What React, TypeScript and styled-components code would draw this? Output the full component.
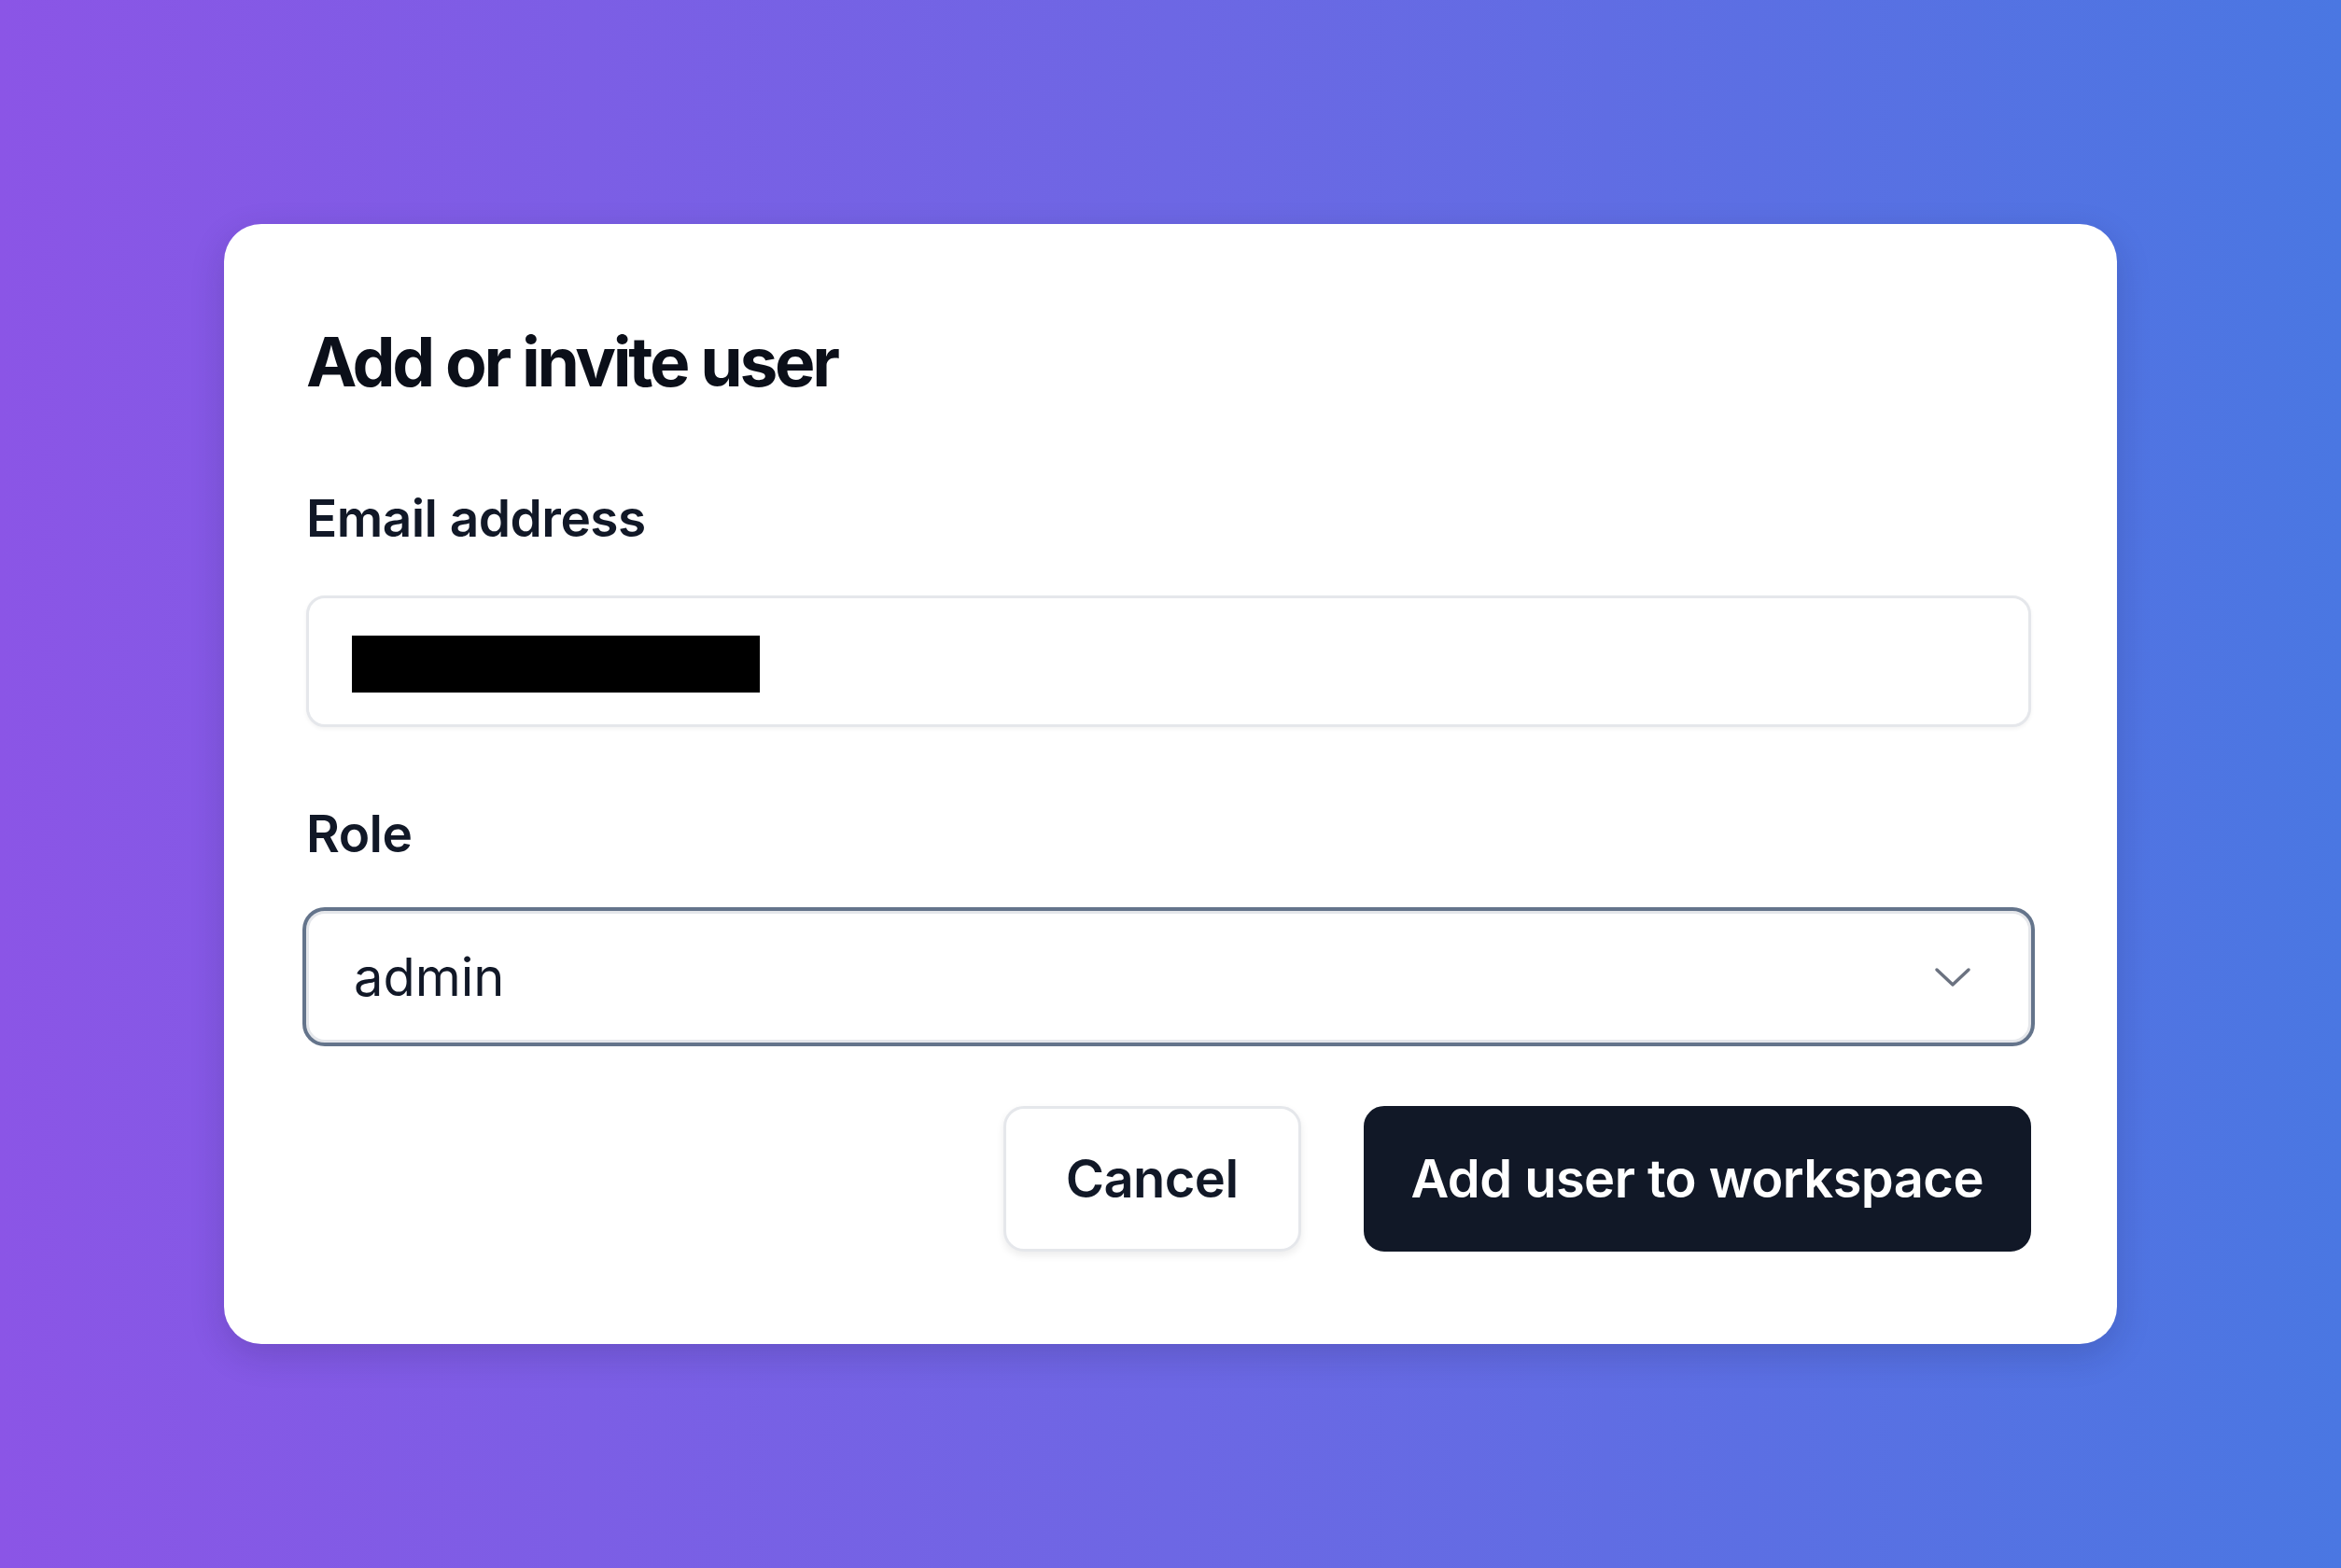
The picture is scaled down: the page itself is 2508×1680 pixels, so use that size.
import styled, { createGlobalStyle } from 'styled-components';

const GlobalStyle = createGlobalStyle`
  html, body {
    margin: 0;
    padding: 0;
  }
  body {
    font-family: Inter, "Noto Sans", sans-serif;
    -webkit-font-smoothing: antialiased;
  }
`;

const Page = styled.div`
  width: 2508px;
  height: 1680px;
  display: flex;
  align-items: center;
  justify-content: center;
  background: linear-gradient(90deg, #8b55e6 0%, #6d67e4 50%, #4a77e2 100%);
`;

const Card = styled.div`
  width: 2028px;
  height: 1200px;
  box-sizing: border-box;
  padding: 102px 92px 100px 88px;
  background: #ffffff;
  border-radius: 40px;
  box-shadow: 0 12px 36px rgba(20, 20, 60, 0.18);
  display: flex;
  flex-direction: column;
`;

const Title = styled.h1`
  margin: 0 0 81px;
  font-size: 73px;
  line-height: 92px;
  font-weight: 700;
  letter-spacing: -0.045em;
  color: #0b0f19;
`;

const Label = styled.label`
  display: block;
  margin-bottom: 42px;
  font-size: 55px;
  line-height: 81px;
  font-weight: 600;
  letter-spacing: -0.01em;
  color: #111827;
`;

const Field = styled.div`
  margin-bottom: 74px;
`;

const TextBox = styled.div`
  height: 141px;
  box-sizing: border-box;
  padding: 0 46px;
  display: flex;
  align-items: center;
  border: 3px solid #e5e7eb;
  border-radius: 20px;
  box-shadow: 0 2px 4px rgba(0, 0, 0, 0.05);
  background: #fff;
`;

const Redacted = styled.span`
  display: block;
  width: 437px;
  height: 61px;
  margin-top: 6px;
  background: #000;
`;

const SelectBox = styled.div`
  height: 141px;
  box-sizing: border-box;
  padding: 0 61px 0 48px;
  display: flex;
  align-items: center;
  justify-content: space-between;
  border: 3px solid #e5e7eb;
  border-radius: 20px;
  box-shadow: 0 0 0 4px #64748b;
  background: #fff;
  font-size: 56px;
  font-weight: 400;
  color: #111827;
`;

const Actions = styled.div`
  margin-top: 68px;
  display: flex;
  justify-content: flex-end;
  gap: 67px;
`;

const Button = styled.button<{ $primary?: boolean }>`
  height: 156px;
  box-sizing: border-box;
  padding: ${({ $primary }) => ($primary ? '0 48px' : '0 64px')};
  border-radius: 22px;
  font-family: Inter, "Noto Sans", sans-serif;
  font-size: 56px;
  font-weight: 600;
  letter-spacing: -0.01em;
  cursor: pointer;
  border: 3px solid ${({ $primary }) => ($primary ? '#111827' : '#e5e7eb')};
  background: ${({ $primary }) => ($primary ? '#111827' : '#ffffff')};
  color: ${({ $primary }) => ($primary ? '#ffffff' : '#111827')};
  box-shadow: ${({ $primary }) => ($primary ? 'none' : '0 4px 8px rgba(0, 0, 0, 0.08)')};
`;

const Chevron = () => (
  <svg width="40" height="24" viewBox="0 0 40 24" fill="none">
    <polyline points="3,4 20,20 37,4" stroke="#6b7280" strokeWidth="3.5" strokeLinecap="round" strokeLinejoin="round" />
  </svg>
);

export default function App() {
  return (
    <>
      <GlobalStyle />
      <Page>
        <Card>
          <Title>Add or invite user</Title>
          <Field>
            <Label>Email address</Label>
            <TextBox>
              <Redacted />
            </TextBox>
          </Field>
          <div>
            <Label>Role</Label>
            <SelectBox>
              <span>admin</span>
              <Chevron />
            </SelectBox>
          </div>
          <Actions>
            <Button>Cancel</Button>
            <Button $primary>Add user to workspace</Button>
          </Actions>
        </Card>
      </Page>
    </>
  );
}
